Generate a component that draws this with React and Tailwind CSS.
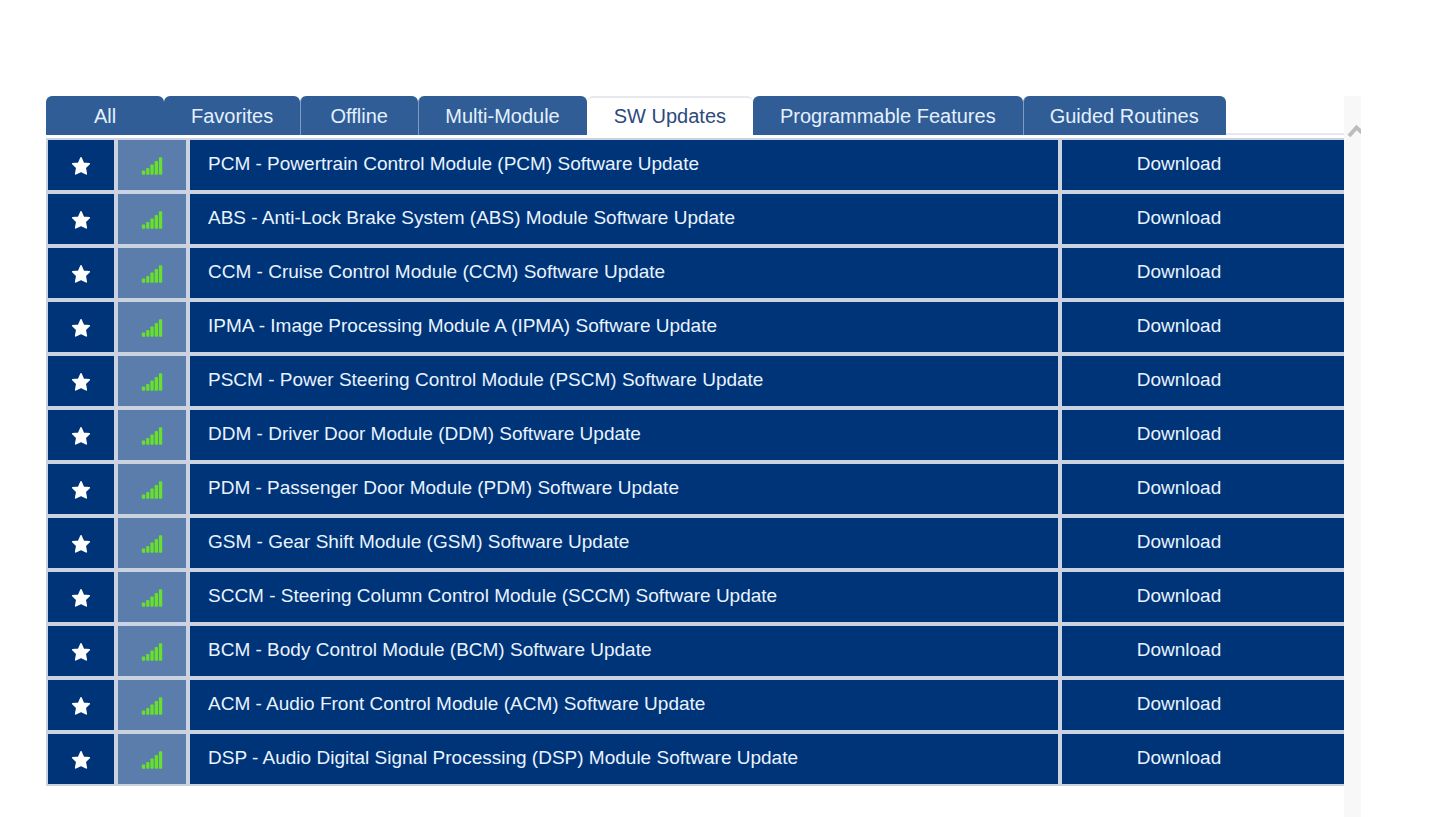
import { useState } from "react";

const tabs = [
  { label: "All" },
  { label: "Favorites" },
  { label: "Offline", divider: true },
  { label: "Multi-Module", divider: true },
  { label: "SW Updates" },
  { label: "Programmable Features" },
  { label: "Guided Routines", divider: true },
];

const updates = [
  "PCM - Powertrain Control Module (PCM) Software Update",
  "ABS - Anti-Lock Brake System (ABS) Module Software Update",
  "CCM - Cruise Control Module (CCM) Software Update",
  "IPMA - Image Processing Module A (IPMA) Software Update",
  "PSCM - Power Steering Control Module (PSCM) Software Update",
  "DDM - Driver Door Module (DDM) Software Update",
  "PDM - Passenger Door Module (PDM) Software Update",
  "GSM - Gear Shift Module (GSM) Software Update",
  "SCCM - Steering Column Control Module (SCCM) Software Update",
  "BCM - Body Control Module (BCM) Software Update",
  "ACM - Audio Front Control Module (ACM) Software Update",
  "DSP - Audio Digital Signal Processing (DSP) Module Software Update",
];

function StarIcon() {
  return (
    <svg viewBox="0 0 20 20" className="w-5 h-5" aria-hidden="true">
      <path
        d="M10 1.8 L12.4 7.2 L18.3 7.8 L14.2 11.8 L15.3 17.9 L10 15.2 L4.7 17.9 L5.8 11.8 L1.7 7.8 L7.6 7.2 Z"
        fill="#fff"
        stroke="#fff"
        strokeWidth="1.6"
        strokeLinejoin="round"
      />
    </svg>
  );
}

function SignalIcon() {
  return (
    <svg
      viewBox="0 0 22 20"
      className="w-[22px] h-5"
      fill="#66e02a"
      role="img"
      aria-label="Online"
    >
      <rect x="0.8" y="14.5" width="3.4" height="4.3" rx="1" />
      <rect x="5.2" y="12" width="3.2" height="6.8" rx="0.8" />
      <rect x="9.4" y="8.5" width="3.3" height="10.3" rx="0.8" />
      <rect x="13.7" y="5" width="3.3" height="13.8" rx="0.8" />
      <rect x="17.9" y="1.2" width="3.3" height="17.6" rx="0.8" />
    </svg>
  );
}

function Tab({ label, divider, active, onClick }) {
  return (
    <button
      role="tab"
      aria-selected={active}
      onClick={onClick}
      className={
        "h-[39px] min-w-[118px] pr-[27px] rounded-t-md text-xl whitespace-nowrap " +
        (divider ? "border-l border-[#7d9bc4] pl-[26px] " : "pl-[27px] ") +
        (active
          ? "bg-white text-[#2c4a7c] border-t-2 border-[#e6e8ee] pb-0.5"
          : "bg-[#305d95] text-[#e4f0ff]")
      }
    >
      {label}
    </button>
  );
}

function UpdateRow({ name }) {
  return (
    <tr className="h-[54px]">
      <td className="border-2 border-[#cbd2e0] bg-[#003478] pt-0.5">
        <button aria-label="Add to favorites" className="flex mx-auto">
          <StarIcon />
        </button>
      </td>
      <td className="border-2 border-[#cbd2e0] bg-[#5b7dab] pt-0.5">
        <div className="flex justify-center">
          <SignalIcon />
        </div>
      </td>
      <td className="border-2 border-[#cbd2e0] bg-[#003478] pl-[18px] pb-0.5">
        {name}
      </td>
      <td className="border-2 border-r-0 border-[#cbd2e0] bg-[#003478] pr-12 pb-0.5 text-center">
        <button>Download</button>
      </td>
    </tr>
  );
}

export default function App() {
  const [activeTab, setActiveTab] = useState("SW Updates");

  return (
    <div className="flex min-h-screen bg-white pt-24 pl-[46px] pr-[79px] font-['Liberation_Sans',Arial,sans-serif]">
      <main className="flex-1 min-w-0">
        <div className="flex items-end" role="tablist">
          {tabs.map((tab) => (
            <Tab
              key={tab.label}
              label={tab.label}
              divider={tab.divider}
              active={tab.label === activeTab}
              onClick={() => setActiveTab(tab.label)}
            />
          ))}
          <div className="flex-1 border-b-2 border-[#e6e8ee]"></div>
        </div>

        <table className="w-full mt-[3px] table-fixed border-separate border-spacing-0 text-[19px] text-[#e8f3ff]">
          <colgroup>
            <col className="w-[70px]" />
            <col className="w-[72px]" />
            <col />
            <col className="w-[284px]" />
          </colgroup>
          <tbody>
            {updates.map((name) => (
              <UpdateRow key={name} name={name} />
            ))}
          </tbody>
        </table>
      </main>

      <aside className="w-[17px] bg-[#f8f8f8] pt-[26px]">
        <button aria-label="Scroll up" className="flex">
          <svg
            viewBox="0 0 17 17"
            className="w-[17px] h-[17px]"
            fill="none"
            stroke="#bdbdbd"
            strokeWidth="4"
            aria-hidden="true"
          >
            <path d="M5 14 L12.5 5.5 L18 10.5" />
          </svg>
        </button>
      </aside>
    </div>
  );
}
